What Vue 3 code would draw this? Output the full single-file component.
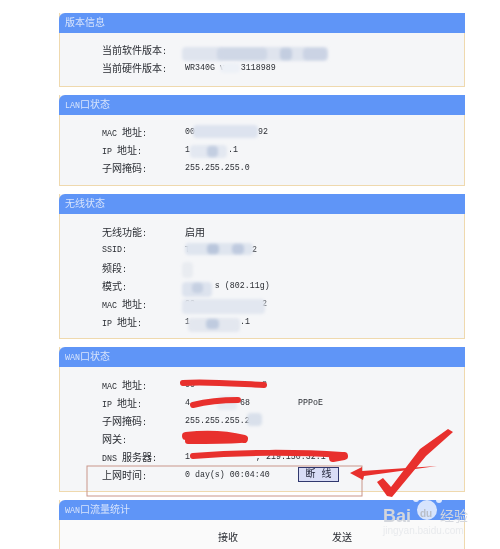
<script setup>
const panels = [
  {
    title: '版本信息',
    spacing: 'first',
    rows: [
      { label: '当前软件版本:', value: '' },
      { label: '当前硬件版本:', value: 'WR340G v', tail: '3118989', gap: 16 },
    ],
  },
  {
    title: 'LAN口状态',
    spacing: 'tight',
    rows: [
      { label: 'MAC 地址:', value: '00', tail: '92', gap: 63 },
      { label: 'IP 地址:', value: '1', tail: '.1', gap: 38 },
      { label: '子网掩码:', value: '255.255.255.0' },
    ],
  },
  {
    title: '无线状态',
    rows: [
      { label: '无线功能:', value: '启用' },
      { label: 'SSID:', value: 'T', tail: '2', gap: 62 },
      { label: '频段:', value: '' },
      { label: '模式:', value: '      s (802.11g)' },
      { label: 'MAC 地址:', value: '00', tail: '2', gap: 67 },
      { label: 'IP 地址:', value: '1', tail: '.1', gap: 50 },
    ],
  },
  {
    title: 'WAN口状态',
    rows: [
      { label: 'MAC 地址:', value: '00', tail: '8', gap: 67 },
      { label: 'IP 地址:', value: '4', tail: '68', gap: 50, extra: 'PPPoE' },
      { label: '子网掩码:', value: '255.255.255.2' },
      { label: '网关:', value: '1', tail: '1', gap: 50 },
      { label: 'DNS 服务器:', value: '1', tail: ', 219.150.32.1', gap: 66 },
      { label: '上网时间:', value: '0 day(s) 00:04:40', button: '断 线' },
    ],
  },
];

const blurs = [
  { x: 182, y: 47, w: 146, h: 14, fill: '#dfe4ee' },
  { x: 217, y: 48, w: 50, h: 12, fill: '#cfd7e6' },
  { x: 280, y: 48, w: 12, h: 12, fill: '#c3cde0' },
  { x: 303, y: 48, w: 24, h: 12, fill: '#cbd3e4' },
  { x: 220, y: 63, w: 20, h: 10, fill: '#edf1f7' },
  { x: 193, y: 125, w: 65, h: 13, fill: '#dde3ef' },
  { x: 190, y: 145, w: 37, h: 13, fill: '#e3e8f1' },
  { x: 207, y: 146, w: 11, h: 11, fill: '#c3cee1' },
  { x: 185, y: 243, w: 68, h: 12, fill: '#dfe5ef' },
  { x: 207, y: 244, w: 12, h: 10, fill: '#b9c6dc' },
  { x: 232, y: 244, w: 12, h: 10, fill: '#bfcadf' },
  { x: 182, y: 262, w: 11, h: 16, fill: '#e9ecf1' },
  { x: 182, y: 282, w: 30, h: 15, fill: '#dde3ee' },
  { x: 192, y: 283, w: 11, h: 10, fill: '#c6d0e2' },
  { x: 182, y: 299, w: 83, h: 15, fill: '#e2e7f0' },
  { x: 188, y: 318, w: 52, h: 14, fill: '#e3e7ef' },
  { x: 206, y: 319, w: 13, h: 10, fill: '#bfcbdf' },
  { x: 217, y: 396, w: 20, h: 14, fill: '#e6eaf2' },
  { x: 247, y: 413, w: 15, h: 13, fill: '#d9e0eb' },
];

// 把文字切成西文和中文两段，西文字号要小一点
function runs(text) {
  return text
    .split(/([\x00-\x7f]+)/)
    .filter(Boolean)
    .map((part) => ({ text: part, latin: /^[\x00-\x7f]/.test(part) }));
}
</script>

<template>
  <div class="page">
    <section v-for="panel in panels" :key="panel.title" class="panel">
      <h2 class="head">
        <span v-for="(r, i) in runs(panel.title)" :key="i" :class="{ lat: r.latin }">{{ r.text }}</span>
      </h2>
      <div class="body" :class="panel.spacing">
        <div v-for="row in panel.rows" :key="row.label" class="row">
          <span class="label">
            <span v-for="(r, i) in runs(row.label)" :key="i" :class="{ lat: r.latin }">{{ r.text }}</span>
          </span>
          <span class="value">
            <span v-for="(r, i) in runs(row.value)" :key="i" :class="{ lat: r.latin }">{{ r.text }}</span>
            <span v-if="row.tail" class="lat" :style="{ marginLeft: row.gap + 'px' }">{{ row.tail }}</span>
          </span>
          <span v-if="row.extra" class="lat">{{ row.extra }}</span>
          <button v-if="row.button" class="cut">{{ row.button }}</button>
        </div>
      </div>
    </section>
    <section class="panel last">
      <h2 class="head"><span class="lat">WAN</span>口流量统计</h2>
      <div class="traffic">
        <span>接收</span>
        <span>发送</span>
      </div>
    </section>

    <svg class="marks" viewBox="0 0 500 549" width="500" height="549">
      <defs>
        <filter id="soft" x="-30%" y="-50%" width="160%" height="200%">
          <feGaussianBlur stdDeviation="1.6" />
        </filter>
      </defs>
      <rect
        v-for="(b, i) in blurs"
        :key="i"
        :x="b.x"
        :y="b.y"
        :width="b.w"
        :height="b.h"
        :fill="b.fill"
        rx="4"
        filter="url(#soft)"
      />
      <rect x="87" y="466" width="275" height="30" fill="none" stroke="#c9968a" stroke-width="1" />
      <g fill="none" stroke="#e8302d" stroke-linecap="round" stroke-linejoin="round">
        <path d="M183 383 C205 381 240 384 264 385" stroke-width="6" />
        <path d="M193 405 C205 402 225 400 238 400" stroke-width="6" />
        <path d="M186 436 C205 434 228 435 244 439" stroke-width="8" />
        <path d="M188 441 C205 441 225 441 240 440" stroke-width="6" />
        <path d="M193 456 C240 452 300 452 342 455" stroke-width="6" />
        <path d="M333 458 L344 456" stroke-width="8" />
      </g>
      <path
        d="M377 482 L383 478 L391 487 L420 449 L448 429 L453 432 L426 456 L392 497 L387 496 Z"
        fill="#e8302d"
      />
      <path d="M350 473 L362 467 L362 471 L437 466 L364 476 L363 480 Z" fill="#e8302d" />
      <g>
        <text x="383" y="522" class="bai">Bai</text>
        <circle cx="427" cy="510" r="10" fill="#fff" opacity="0.75" />
        <circle cx="416" cy="499" r="3" fill="#fff" opacity="0.8" />
        <circle cx="424" cy="496" r="3" fill="#fff" opacity="0.8" />
        <circle cx="432" cy="496" r="3" fill="#fff" opacity="0.8" />
        <circle cx="439" cy="500" r="3" fill="#fff" opacity="0.8" />
        <text x="420" y="517" class="du">du</text>
        <text x="440" y="521" class="jy">经验</text>
        <text x="383" y="534" class="url">jingyan.baidu.com</text>
      </g>
    </svg>
  </div>
</template>

<style scoped>
.page {
  position: relative;
  width: 500px;
  height: 549px;
  box-sizing: border-box;
  padding: 13px 35px 0 59px;
  overflow: hidden;
  background: #fff;
  color: #2a2d33;
  font-family: "Liberation Mono", "Noto Sans CJK SC", monospace;
  font-size: 10px;
  filter: blur(0.3px);
}

.panel {
  margin-bottom: 8px;
  border: 1px solid #efd9ae;
  border-top: none;
  background: #f5f6f8;
}

.panel.last {
  margin-bottom: 0;
  background: #fafafa;
}

.head {
  height: 20px;
  margin: 0 -1px;
  padding-left: 6px;
  border-radius: 6px 0 0 0;
  background: #5f95f7;
  color: #d8e4fb;
  font-size: 10px;
  font-weight: normal;
  line-height: 22px;
}

.body {
  padding: 8px 0 8px 42px;
}

.body.first {
  padding: 7px 0 10px 42px;
}

.body.tight {
  padding: 7px 0 9px 42px;
}

.row {
  display: flex;
  align-items: center;
  height: 18px;
}

.label {
  width: 83px;
  flex: none;
}

.value {
  width: 113px;
  flex: none;
  white-space: pre;
}

.lat {
  font-size: 8.3px;
}

.cut {
  width: 41px;
  height: 15px;
  padding: 0;
  border: 1px solid #30386e;
  border-radius: 0;
  background: #d9ddf6;
  color: #1c1f33;
  font-family: inherit;
  font-size: 10px;
  line-height: 13px;
}

.traffic {
  display: flex;
  height: 29px;
  padding: 9px 0 0 158px;
  box-sizing: border-box;
  gap: 94px;
  font-size: 10px;
}

.marks {
  position: absolute;
  left: 0;
  top: 0;
  pointer-events: none;
}

.bai,
.du {
  font-family: "Liberation Sans", sans-serif;
  font-weight: bold;
}

.bai {
  font-size: 18px;
  fill: #d3d6dc;
}

.du {
  font-size: 10px;
  fill: #b9bec8;
}

.jy {
  font-family: "Noto Sans CJK SC", sans-serif;
  font-size: 14px;
  fill: #d4d7dd;
}

.url {
  font-family: "Liberation Sans", sans-serif;
  font-size: 10px;
  fill: #e8eaed;
}
</style>
